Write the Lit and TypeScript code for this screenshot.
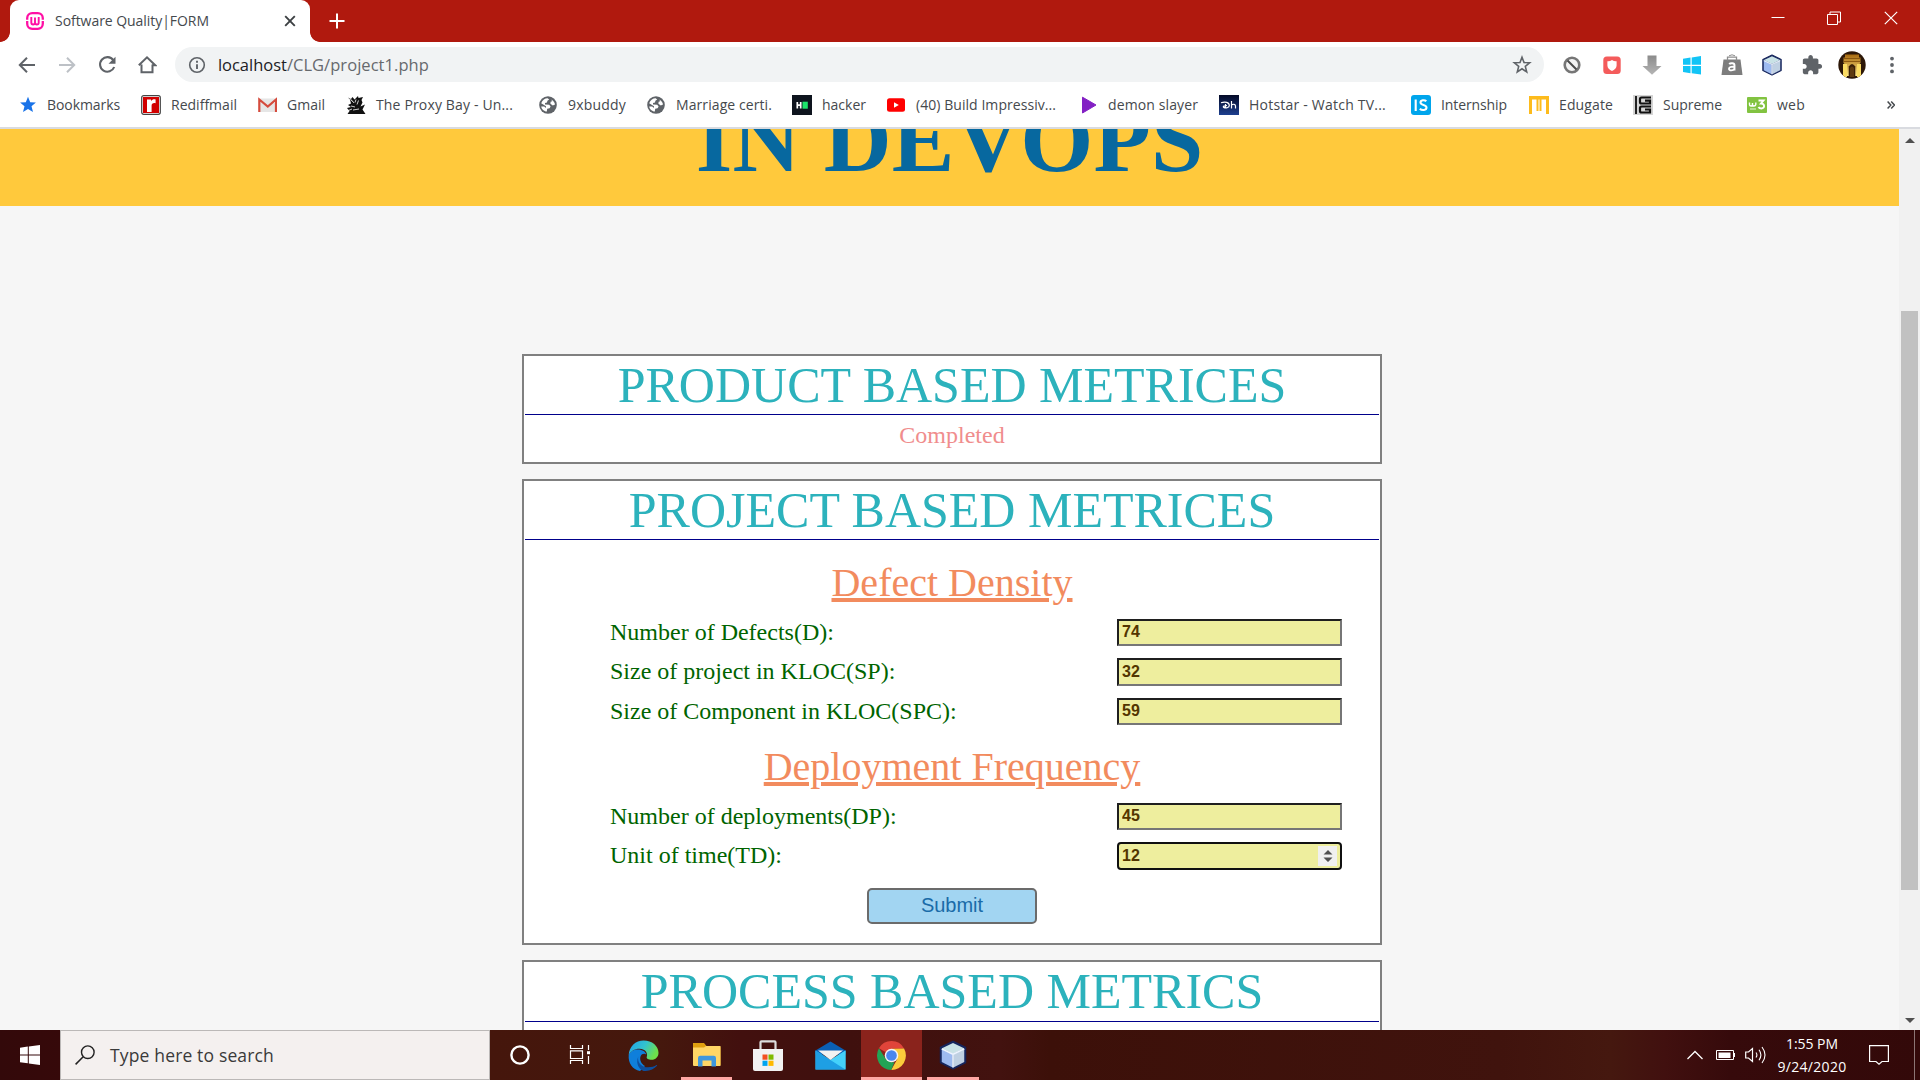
import { LitElement, html, css, svg } from "lit";
import { customElement, property } from "lit/decorators.js";

/** Single-line label that spreads its letters over a set width. */
@customElement("fit-text")
class FitText extends LitElement {
  @property() text = "";
  @property({ type: Number }) width = 0;
  static styles = css`
    :host { display: block; white-space: pre; flex: none; }
  `;
  render() {
    return html`<span>${this.text}</span>`;
  }
  firstUpdated() {
    const span = this.renderRoot.querySelector("span") as HTMLElement;
    const natural = span.getBoundingClientRect().width;
    const spacing = (this.width - natural) / Math.max(1, this.text.length);
    span.style.letterSpacing = `${spacing.toFixed(3)}px`;
  }
}

const globe = html`<svg width="20" height="20" viewBox="0 0 20 20">
  <circle cx="10" cy="10" r="8.8" fill="#5f6368" />
  <path d="M3.2 8.2C4.5 5 7 3.2 9.6 3.2l1.6 1.2-1.8 1.4-.4 1.8-2 .4 0 1.6 4.2.2 1.4 1.8-1 1.6-2.4.6-.4 2.6C6 16.4 3.6 14 3.2 11.4l3 .2 1.6 1.4.2-1.8z" fill="#fff" />
  <path d="M13.2 4.4c2.2 1.2 3.6 3 3.8 5l-2.2 1-2.4-1.6.2-2 1.6-.6z" fill="#fff" />
</svg>`;

const cube = (s: number) => html`<svg width=${s} height=${s} viewBox="0 0 24 24">
  <path d="M12 1.2 22 6v12l-10 5L2 18V6z" fill="#16255c" stroke="#16255c" stroke-width="1.2" stroke-linejoin="round" />
  <path d="M12 2.4 20.8 6.6 12 11 3.2 6.6z" fill="#c9e2e6" />
  <path d="M3 7.2 11.7 11.6V22L3 17.6z" fill="#9dbaf0" />
  <path d="M21 7.2 12.3 11.6V22l8.7-4.4z" fill="#bfd0e2" />
  <path d="M3 7 12 11.4 21 7M12 11.2V22" fill="none" stroke="#eef5ff" stroke-width="1.3" />
</svg>`;

interface Bookmark { label: string; text: number; slot: number; icon: unknown; }

const bookmarks: Bookmark[] = [
  { label: "Bookmarks", text: 73, slot: 124, icon: html`<svg width="20" height="20" viewBox="0 0 20 20"><path d="M11 1.800l2.200 5.500 5.700.300-4.400 3.700 1.500 5.800-5-3.200-5 3.200 1.500-5.800L3.100 7.600l5.700-.300z" fill="#1a73e8" /></svg>` },
  { label: "Rediffmail", text: 66, slot: 116, icon: html`<svg width="20" height="20" viewBox="0 0 20 20"><rect x=".7" y=".7" width="18.6" height="18.6" rx="2" fill="#fff" stroke="#444" stroke-width="1.2" /><rect x="2" y="2" width="16" height="16" fill="#d10000" /><path d="M6 4.5h4v1.8c1-1.6 2.4-2.2 4.6-1.9v3.8c-2.6-.5-4 .3-4 2.6V17H6z" fill="#fff" /></svg>` },
  { label: "Gmail", text: 38, slot: 89, icon: html`<svg width="20" height="20" viewBox="0 0 20 20"><rect x="2.000" y="3.500" width="17" height="13.5" rx="1" fill="#e6e6e6" /><path d="M2.300 17V4.500L10.800 11.500l8.200-7V17" fill="none" stroke="#d54b3d" stroke-width="2.2" /></svg>` },
  { label: "The Proxy Bay - Un...", text: 137, slot: 192, icon: html`<svg width="20" height="20" viewBox="0 0 20 20"><path d="M2 2.500 5 4l1.500-2 2 2.500L12 1l.500 2L17 2l-1.500 3 1 2.500-2 4 4.500-2-2.500 5 3 4.500H1.500l2-3-2.500-3 4-1-3-2 3-1.500-1-4z" fill="#111" /><path d="M4 3.500l2.500 3M6 5.500l2 2.500M10 4.500l-1 3M12.500 5.500l-1.500 4M5 11l4 1M7 15l6-1M1 16l5-2" stroke="#fff" stroke-width=".8" /></svg>` },
  { label: "9xbuddy", text: 58, slot: 108, icon: globe },
  { label: "Marriage certi.", text: 96, slot: 146, icon: globe },
  { label: "hacker", text: 44, slot: 94, icon: html`<svg width="20" height="20" viewBox="0 0 20 20"><rect width="20" height="20" fill="#0e141e" /><path d="M5.300 7v6.500M8.700 7v6.500M5 10.200h4" stroke="#fff" stroke-width="1.700" /><rect x="10.500" y="6.700" width="5.300" height="7" fill="#1ce46b" /></svg>` },
  { label: "(40) Build Impressiv...", text: 140, slot: 192, icon: html`<svg width="20" height="20" viewBox="0 0 20 20"><rect x="1" y="3.300" width="18" height="13.500" rx="2.500" fill="#f00" /><path d="M8 7.300v5.400l4.800-2.700z" fill="#fff" /></svg>` },
  { label: "demon slayer", text: 90, slot: 141, icon: html`<svg width="20" height="20" viewBox="0 0 20 20"><path d="M4.500 2.200 18 10 4.500 18z" fill="#8320c4" stroke="#8320c4" stroke-linejoin="round" /></svg>` },
  { label: "Hotstar - Watch TV...", text: 137, slot: 192, icon: html`<svg width="20" height="20" viewBox="0 0 20 20"><defs><linearGradient id="hs" x1="0" y1="0" x2="0" y2="1"><stop offset="0" stop-color="#040a26" /><stop offset="1" stop-color="#1d3f8f" /></linearGradient></defs><rect width="20" height="20" fill="url(#hs)" /><path d="M2 7.800c4-1.600 8.300-.6 8.300 2.600 0 2.600-3.700 3-5.600 2-1.300-.9.800-1.900 3.300-1.900M6.500 9v3.500M12.500 6v7.500M12.500 10.200c1.500-1.500 4-1.200 4 .800v2.500" fill="none" stroke="#fff" stroke-width="1.200" /></svg>` },
  { label: "Internship", text: 66, slot: 118, icon: html`<svg width="20" height="20" viewBox="0 0 20 20"><rect width="20" height="20" rx="3" fill="#00a5ec" /><path d="M4.700 4.500v11.500M15.300 6.300C13.500 4.500 9.500 5 9.500 7.500c0 3.200 6 1.800 6 5 0 2.900-4.500 3.300-6.700 1.200" fill="none" stroke="#fff" stroke-width="2.100" /></svg>` },
  { label: "Edugate", text: 54, slot: 104, icon: html`<svg width="20" height="20" viewBox="0 0 20 20"><path d="M0 1h20v18h-3V4.500h-4.500V16h-2V4.500h-1V16h-2V4.500H3V19H0z" fill="#fdbb1c" /></svg>` },
  { label: "Supreme", text: 59, slot: 114, icon: html`<svg width="20" height="20" viewBox="0 0 20 20"><rect width="20" height="20" fill="#d5d5d5" /><path d="M3 1v18" stroke="#222" stroke-width="2" /><path d="M18 2.500H8.500q-1.500 0-1.500 1.500v3q0 1.500 1.500 1.500H17V5.700h-5M18 11.500H8.500q-1.500 0-1.500 1.500v3q0 1.500 1.500 1.500H17v-3h-5" fill="none" stroke="#111" stroke-width="2.200" /></svg>` },
  { label: "web", text: 28, slot: 60, icon: html`<svg width="20" height="20" viewBox="0 0 20 20"><rect y="2" width="20" height="16" rx="1" fill="#82c341" /><path d="M2.500 7.500v2q0 1.500 1.500 1.500t1.500-1.500V8v1.500Q5.500 11 7 11t1.800-1.500v-2" fill="none" stroke="#fff" stroke-width="1.400" /><path d="M11.500 5.500h5l-2.500 3c4-.2 4 5 .500 5-1.500 0-2.500-.5-3-1.500" fill="none" stroke="#fff" stroke-width="1.900" /><path d="M3 14h6" stroke="#d5efbd" stroke-width="1.200" /></svg>` },
];

const extensions = [
  html`<svg width="20" height="20" viewBox="0 0 20 20"><circle cx="10" cy="10" r="7.300" fill="#f3f3f3" stroke="#767676" stroke-width="2.600" /><path d="M5.500 5.500l9 9" stroke="#4a4a4a" stroke-width="2" /></svg>`,
  html`<svg width="20" height="20" viewBox="0 0 20 20"><rect x="1.300" y="1.500" width="17.400" height="17.400" rx="3.500" fill="#f45b5b" /><path d="M5.400 6.300c1.700.2 3.200-.3 4.600-1.300 1.400 1 2.900 1.500 4.600 1.300v4.200c0 2.600-2 4.300-4.600 5.500-2.600-1.200-4.600-2.900-4.600-5.500z" fill="#fff" /></svg>`,
  html`<svg width="20" height="20" viewBox="0 0 20 20"><defs><linearGradient id="dl" x1="0" y1="0" x2="0" y2="1"><stop offset="0" stop-color="#8b8b8b" /><stop offset="1" stop-color="#b5b5b5" /></linearGradient></defs><path d="M5.500.500h9V11H19.500L10 19.800.500 11h5z" fill="url(#dl)" /></svg>`,
  html`<svg width="20" height="20" viewBox="0 0 20 20"><path d="M1 3.800 8.500 2.600v7.200H1zM9.700 2.400 19 1v8.800H9.700zM1 11h7.500v7.200L1 17.100zM9.700 11H19v8.600l-9.300-1.300z" fill="#12c4f6" /></svg>`,
  html`<svg width="22" height="22" viewBox="0 0 22 22"><path d="M2.500 5.500h17L21.500 21H.500z" fill="#7d7d7d" /><path d="M6.500 6.500V3.200h9v3.300" fill="none" stroke="#8d8d8d" stroke-width="1.300" /><path d="M8 1.800q3-2 6 0" fill="none" stroke="#8d8d8d" /><path d="M8.200 10.200c1-1.300 5.300-1.500 5.300 1v5.300M13.500 12.800c-2-.3-5.500 0-5.500 1.900 0 2.500 4.300 2 5.500 0" fill="none" stroke="#fff" stroke-width="1.900" /></svg>`,
  cube(22),
  html`<svg width="22" height="22" viewBox="0 0 24 24"><path d="M20.500 11H19V7c0-1.100-.9-2-2-2h-4V3.500C13 2.120 11.880 1 10.500 1S8 2.120 8 3.500V5H4c-1.100 0-1.990.9-1.990 2v3.800H3.500c1.490 0 2.700 1.210 2.700 2.700s-1.210 2.700-2.700 2.700H2V20c0 1.100.9 2 2 2h3.800v-1.500c0-1.490 1.210-2.700 2.700-2.700s2.700 1.210 2.700 2.700V22H17c1.100 0 2-.9 2-2v-4h1.500c1.380 0 2.500-1.120 2.500-2.500S21.880 11 20.500 11z" fill="#5f6368" /></svg>`,
  html`<svg width="28" height="28" viewBox="0 0 28 28"><defs><clipPath id="av"><circle cx="14" cy="14" r="13.700" /></clipPath><linearGradient id="gl" x1="0" y1="0" x2="0" y2="1"><stop offset="0" stop-color="#a86a10" /><stop offset="1" stop-color="#ffe985" /></linearGradient></defs><g clip-path="url(#av)"><rect width="28" height="28" fill="#2c1708" /><path d="M7 3.500h14v3h1.500V12l-1 1v12h-15V13l-1-1V6.500H7z" fill="url(#gl)" /><path d="M5 13h4v13H5zM19 13h4v13h-4z" fill="#fbdc62" /><path d="M10.700 26V15.500q3.300-5 6.600 0V26z" fill="#3b2008" /><path d="M12 26V17q2-3 4 0v9z" fill="#5e3a10" /><path d="M6 7.500h16M6 10.500h16" stroke="#7c4a08" stroke-width=".8" /></g></svg>`,
  html`<svg width="20" height="20" viewBox="0 0 20 20"><circle cx="10" cy="3.600" r="1.900" fill="#5f6368" /><circle cx="10" cy="10" r="1.900" fill="#5f6368" /><circle cx="10" cy="16.400" r="1.900" fill="#5f6368" /></svg>`,
];

const navIcons = [
  svg`<path d="M18 10H3M10 2.800 2.800 10l7.200 7.200" fill="none" stroke="#5f6368" stroke-width="2" />`,
  svg`<path d="M2 10h15M10 2.800l7.200 7.200-7.200 7.200" fill="none" stroke="#bdc1c6" stroke-width="2" />`,
  svg`<path d="M16.300 5.200A7.300 7.300 0 1 0 17.200 12" fill="none" stroke="#5f6368" stroke-width="2.100" /><path d="M18.500 1.800v7h-7z" fill="#5f6368" />`,
  svg`<path d="M4.500 9.500v7.800h11V9.500M1.800 10.200 10 2.400l8.200 7.800H15" fill="none" stroke="#5f6368" stroke-width="2" />`,
];

const wlogo = (fill: string) => html`<svg width="20" height="20" viewBox="0 0 20 20"><path d="M0 2.700 7.800 1.600v7.800H0zM8.800 1.500 20 0v9.400H8.800zM0 10.400h7.800v7.800L0 17.200zM8.800 10.400H20V20L8.800 18.400z" fill=${fill} /></svg>`;

interface TaskItem { w: number; state: string; icon: unknown; }
const tasks: TaskItem[] = [
  { w: 60, state: "", icon: html`<svg width="22" height="22" viewBox="0 0 22 22"><circle cx="11" cy="11" r="8.600" fill="none" stroke="#fff" stroke-width="2.400" /></svg>` },
  { w: 60, state: "", icon: html`<svg width="22" height="22" viewBox="0 0 22 22"><path d="M1.500 1v3.500h12V1M1.500 20v-3.500h12V20M1.500 6.800h12v7.700h-12zM19.500 1v5M19.500 12v8" fill="none" stroke="#fff" stroke-width="1.200" /><rect x="18" y="7.200" width="3" height="3" fill="#fff" /></svg>` },
  { w: 66, state: "", icon: html`<svg width="31" height="31" viewBox="0 0 31 31"><defs><linearGradient id="e1" x1="0" y1="0" x2="1" y2=".4"><stop offset="0" stop-color="#1f9fe8" /><stop offset=".55" stop-color="#32c2cf" /><stop offset="1" stop-color="#6ee04b" /></linearGradient></defs><path d="M12 31C4.500 29.500 0 23 .700 15c2-4 5-5.500 9-5.500 5 0 8 2.500 8.500 5-2-1.500-4.500-.5-5.500 1.500-1.500 3.500.500 8 4.300 10z" fill="#0f7fdb" /><path d="M10.300 16.500c-1.300 5.500 3.200 10.800 9.700 10.800 3.500 0 6.500-1 8.500-2.300.5 0 .8.300.5.800C26 29.300 21 31.300 15.500 31c-5-1.500-8-8.500-5.200-14.500z" fill="#0e4f9e" /><path d="M.700 15C1.200 6.500 7.500.500 15.700.500 24 .500 30.500 6 30.500 12.800c0 4.300-3 7-6.800 7-3.500 0-5.400-1.300-5-2.700 1.300-3-.5-8.400-7.200-8.400-5 0-9 2.500-10.800 6.300z" fill="url(#e1)" /></svg>` },
  { w: 61, state: "run", icon: html`<svg width="28" height="26" viewBox="0 0 28 26"><path d="M0 1h11l2.500 3H26q1.500 0 1.500 1.500V23H0z" fill="#e0a010" /><path d="M0 5.500h11l2-1.500h14.500V24H1q-1 0-1-1z" fill="#ffd666" /><path d="M5 24.500V16q0-2.200 2.200-2.200h13.600q2.200 0 2.200 2.200v8.500h-4.500V18.500h-9v6z" fill="#3f97dd" /></svg>` },
  { w: 62, state: "", icon: html`<svg width="30" height="31" viewBox="0 0 30 31"><path d="M7.500 10V2.300q0-1 1-1h13q1 0 1 1V10" fill="none" stroke="#ddd" stroke-width="2.200" /><path d="M0 9h30v20q0 2-2 2H2q-2 0-2-2z" fill="#f2f2f2" /><path d="M9.500 14.500h5v5.200h-5z" fill="#f25022" /><path d="M15.500 14.500h5v5.200h-5z" fill="#7fba00" /><path d="M9.500 20.700h5v5.200h-5z" fill="#00a4ef" /><path d="M15.500 20.700h5v5.200h-5z" fill="#ffb900" /></svg>` },
  { w: 62, state: "", icon: html`<svg width="31" height="29" viewBox="0 0 31 29"><path d="M.500 9.500 15.500.500l15 9v4H.500z" fill="#0a5fb4" /><path d="M.500 9.500v19h30v-19l-15 9.500z" fill="#2db8f0" /><path d="M.500 9.500 30.500 28.500H.500z" fill="#1e9fe4" /><path d="M30.500 9.500 15.500 19l15 9.500z" fill="#44d1fa" /><path d="M3 9.500h25L15.500 19z" fill="#f2f2f2" /></svg>` },
  { w: 61, state: "active", icon: html`<svg width="29" height="29" viewBox="0 0 30 30"><path d="M15 15 2 7.500A15 15 0 0 1 28 7.700L15 8z" fill="#e0443a" /><path d="M28 7.700A15 15 0 0 1 14.700 30L21 18.500 15 8z" fill="#fbcb3b" /><path d="M14.700 30A15 15 0 0 1 2 7.500L9 18.500l6 3.500 3 0z" fill="#23a455" /><circle cx="15" cy="15" r="7" fill="#f3f3f3" /><circle cx="15" cy="15" r="5.500" fill="#4a86ee" /></svg>` },
  { w: 62, state: "run", icon: cube(30) },
];

@customElement("app-root")
class AppRoot extends LitElement {
  static styles = css`
    :host {
      display: flex; flex-direction: column; width: 1920px; height: 1080px; overflow: hidden;
      font-family: "Open Sans", "Noto Sans", sans-serif; background: #f6f6f6;
    }
    * { box-sizing: border-box; }
    svg { display: block; flex: none; }
    .strip { height: 42px; background: #b0190e; display: flex; align-items: stretch; flex: none; }
    .tabwrap { width: 320px; display: flex; }
    .foot { width: 10px; align-self: flex-end; height: 10px; }
    .foot.l { background: radial-gradient(circle at 0 0, #b0190e 9.500px, #fff 10.200px); }
    .foot.r { background: radial-gradient(circle at 100% 0, #b0190e 9.500px, #fff 10.200px); }
    .tab { width: 300px; background: #fff; border-radius: 9px 9px 0 0; display: flex; align-items: center; padding: 0 14px 0 16px; }
    .tabtitle { margin-left: 11px; font-size: 14px; color: #45494d; flex: 1; padding-bottom: 1px; }
    .plus { margin-left: 9px; align-self: center; }
    .winbtns { margin-left: auto; display: flex; padding-right: 1px; }
    .winbtns span { width: 56.500px; display: flex; justify-content: center; padding-top: 11px; }
    .toolbar { height: 45px; background: #fff; display: flex; align-items: center; flex: none; padding: 0 8px 0 7.500px; }
    .nav { width: 40px; display: flex; justify-content: center; }
    .omni { height: 35px; width: 1370px; margin-left: 7.500px; border-radius: 18px; background: #f1f3f4; display: flex; align-items: center; padding: 0 12px 0 12px; }
    .url { display: flex; margin-left: 11px; flex: 1; font-size: 16.500px; color: #66696d; }
    .host { color: #202124; }
    .exts { display: flex; margin-left: 8px; }
    .exts span { width: 40px; display: flex; justify-content: center; align-items: center; }
    .marks { height: 42px; background: #fff; border-bottom: 2px solid #d9dbe0; display: flex; align-items: center; flex: none; padding: 0 25px 4px 17px; font-size: 14px; color: #45494d; }
    .mark { display: flex; align-items: center; gap: 10px; flex: none; }
    .mark fit-text { padding-bottom: 1px; }
    .more { margin-left: auto; }
    .view { height: 901px; display: flex; flex: none; }
    .page { width: 1899px; overflow: hidden; background: #f6f6f6; font-family: "Liberation Serif", serif; }
    .banner { height: 77px; background: #ffc93c; display: flex; justify-content: center; align-items: flex-end; overflow: hidden; padding-bottom: 15px; margin-bottom: 148px; }
    .banner h1 { margin: 0; font-size: 94px; line-height: 104px; color: #07689f; flex: none; }
    .box { width: 860px; margin: 0 0 15px 522px; border: 2px solid #808080; background: #fff; padding: 1px; display: flex; flex-direction: column; align-items: center; }
    .b1 { height: 110px; }
    .b2 { height: 466px; }
    .b3 { height: 110px; }
    .box h2 { margin: 0; align-self: stretch; text-align: center; font-weight: 400; font-size: 50px; line-height: 57px; border-bottom: 1px solid #00008b; color: #2cb2bc; flex: none; }
    .b3 h2 { line-height: 56px; padding-bottom: 2px; }
    .done { font-size: 24px; line-height: 27px; color: #f08d8d; margin-top: 7px; }
    h3 { margin: 19.500px 0 7.250px; font-weight: 400; font-size: 40px; line-height: 46px; color: #f28b5e; text-decoration: underline; text-decoration-thickness: 4px; text-underline-offset: 2px; }
    h3.second { margin-top: 12.250px; }
    .row { width: 732px; height: 39.500px; display: grid; grid-template-columns: 507px 225px; align-items: center; font-size: 24px; line-height: 27px; color: #006400; margin-left: 48px; flex: none; }
    .row > span { padding-bottom: 1px; }
    .field { height: 27.500px; border: 2px solid; border-color: #1f1f1f #767676 #767676 #1f1f1f; background: #eeee9e; display: flex; align-items: center; padding: 0 3px; }
    .field.focus { border: 2px solid #101010; border-radius: 4px; }
    .field input { flex: 1; min-width: 0; border: 0; padding: 0 0 1px; margin: 0; outline: 0; background: none; font: 700 16px/18px "Liberation Sans", sans-serif; color: #533500; }
    .spin { width: 19px; height: 20px; background: #f0f0f0; display: flex; align-items: center; justify-content: center; }
    .submit { margin-top: 12.250px; width: 170px; height: 36px; border: 2px solid #6b6b6b; border-radius: 5px; background: #a2d5f2; font: 20px "Liberation Sans", sans-serif; color: #1a6ba8; padding: 0 0 2px; }
    .scroll { width: 21px; background: #f1f1f1; display: flex; flex-direction: column; align-items: center; padding: 9px 0 7px; justify-content: space-between; }
    .thumb { width: 17px; height: 579px; background: #c1c1c1; margin-bottom: -39px; }
    .taskbar { height: 50px; flex: none; display: flex; color: #fff; background: linear-gradient(90deg, #33090a 0, #36090a 60px, #45160c 490px, #45180d 660px, #42100e 740px, #3f100e 850px, #42120f 1000px, #3c1009 1050px, #40130d 1500px, #45180f 1610px, #41100f 1665px, #360a0b 1730px, #330909 100%); }
    .start { width: 60px; display: flex; align-items: center; justify-content: center; }
    .search { width: 430px; background: #f4f0ef; border: 1px solid #bbb8b7; display: flex; align-items: center; padding-left: 14px; gap: 15px; font-size: 17.500px; color: #3a3a3a; }
    .task { height: 50px; display: flex; align-items: center; justify-content: center; position: relative; }
    .task.run::after, .task.active::after { content: ""; position: absolute; bottom: 0; left: 5px; right: 5px; height: 3px; background: #ffa7a4; }
    .task.active { background: #8a231c; }
    .task.active::after { left: 0; right: 0; }
    .tray { margin-left: auto; display: flex; align-items: center; }
    .clock { display: flex; flex-direction: column; align-items: center; width: 68px; margin: 0 23px 0 11px; font-size: 14px; line-height: 23px; padding-bottom: 1px; }
    .peek { width: 1px; height: 50px; background: #8c7574; margin: 0 5px 0 25px; }
  `;

  private row(label: string, value: string, focus = false) {
    return html`<div class="row"><span>${label}</span>
      <div class="field ${focus ? "focus" : ""}"><input .value=${value} aria-label=${label} />
        ${focus ? html`<span class="spin"><svg width="10" height="14" viewBox="0 0 10 14"><path d="M.500 5.500 5 1l4.500 4.500zM.500 8.500h9L5 13z" fill="#505050" /></svg></span>` : ""}
      </div></div>`;
  }

  render() {
    return html`
      <header class="strip">
        <div class="tabwrap"><i class="foot l"></i>
          <div class="tab">
            <svg width="18" height="18" viewBox="0 0 18 18"><rect x="1.200" y="1.200" width="15.600" height="15.600" rx="5" fill="none" stroke="#ff10a5" stroke-width="2.300" /><path d="M5.300 5v5.500q0 2 1.800 2T9 10.500V5.500v5q0 2 1.900 2t1.800-2V5" fill="none" stroke="#ff10a5" stroke-width="1.900" /><path d="M0 8.300h3M15 8.300h3" stroke="#fff" stroke-width="1.300" /></svg>
            <fit-text class="tabtitle" text="Software Quality|FORM" width="154"></fit-text>
            <svg width="12" height="12" viewBox="0 0 12 12"><path d="M1.200 1.200l9.600 9.600M10.800 1.200l-9.600 9.600" stroke="#3c4043" stroke-width="1.900" /></svg>
          </div><i class="foot r"></i></div>
        <svg class="plus" width="16" height="16" viewBox="0 0 16 16"><path d="M8 .500v15M.500 8h15" stroke="#fff" stroke-width="2" /></svg>
        <div class="winbtns">
          <span><svg width="14" height="14" viewBox="0 0 14 14"><path d="M.500 6.500h13" stroke="#fff" /></svg></span>
          <span><svg width="14" height="14" viewBox="0 0 14 14"><path d="M.500 3.500h10v10H.500zM3 3.500v-2.500h10.500v10H10.500" fill="none" stroke="#fff" stroke-width="1" /></svg></span>
          <span><svg width="14" height="14" viewBox="0 0 14 14"><path d="M.800.800l12.400 12.400M13.200.800.800 13.200" stroke="#fff" stroke-width="1.200" /></svg></span>
        </div>
      </header>
      <nav class="toolbar">
        ${navIcons.map((i) => html`<span class="nav"><svg width="20" height="20" viewBox="0 0 20 20">${i}</svg></span>`)}
        <div class="omni">
          <svg width="20" height="20" viewBox="0 0 20 20"><circle cx="10" cy="10" r="7.300" fill="none" stroke="#5f6368" stroke-width="1.600" /><path d="M10 9.200v4.800M10 5.800v1.900" stroke="#5f6368" stroke-width="1.900" /></svg>
          <div class="url"><fit-text class="host" text="localhost" width="69"></fit-text><fit-text text="/CLG/project1.php" width="142"></fit-text></div>
          <svg width="20" height="20" viewBox="0 0 20 20"><path d="M10 2.300l2 5.200 5.700.300-4.400 3.600 1.400 5.500-4.700-3.100-4.700 3.100 1.400-5.500-4.400-3.600 5.700-.300z" fill="none" stroke="#5f6368" stroke-width="1.600" /></svg>
        </div>
        <div class="exts">${extensions.map((e) => html`<span>${e}</span>`)}</div>
      </nav>
      <nav class="marks">
        ${bookmarks.map((b) => html`<div class="mark" style="width:${b.slot}px">${b.icon}<fit-text text=${b.label} width=${b.text}></fit-text></div>`)}
        <svg class="more" width="8" height="8" viewBox="0 0 8 8"><path d="M.600.600 3.800 4 .600 7.400M4.200.600 7.400 4 4.200 7.400" fill="none" stroke="#45494d" stroke-width="1.500" /></svg>
      </nav>
      <div class="view">
        <main class="page">
          <div class="banner"><h1>IN DEVOPS</h1></div>
          <section class="box b1"><h2>PRODUCT BASED METRICES</h2><div class="done">Completed</div></section>
          <section class="box b2"><h2>PROJECT BASED METRICES</h2>
            <h3>Defect Density</h3>
            ${this.row("Number of Defects(D):", "74")}
            ${this.row("Size of project in KLOC(SP):", "32")}
            ${this.row("Size of Component in KLOC(SPC):", "59")}
            <h3 class="second">Deployment Frequency</h3>
            ${this.row("Number of deployments(DP):", "45")}
            ${this.row("Unit of time(TD):", "12", true)}
            <button class="submit">Submit</button>
          </section>
          <section class="box b3"><h2>PROCESS BASED METRICS</h2></section>
        </main>
        <div class="scroll">
          <svg width="10" height="5" viewBox="0 0 10 5"><path d="M0 5 5 0l5 5z" fill="#505050" /></svg>
          <div class="thumb"></div>
          <svg width="10" height="5" viewBox="0 0 10 5"><path d="M0 0h10L5 5z" fill="#505050" /></svg>
        </div>
      </div>
      <footer class="taskbar">
        <div class="start">${wlogo("#fff")}</div>
        <div class="search">
          <svg width="20" height="20" viewBox="0 0 20 20"><circle cx="12.800" cy="7.200" r="6.300" fill="none" stroke="#222" stroke-width="1.400" /><path d="M8.200 11.800.600 19.400" stroke="#222" stroke-width="1.500" /></svg>
          <fit-text text="Type here to search" width="164"></fit-text>
        </div>
        ${tasks.map((t) => html`<div class="task ${t.state}" style="width:${t.w}px">${t.icon}</div>`)}
        <div class="tray">
          <svg width="16" height="10" viewBox="0 0 16 10"><path d="M.500 9 8 1.500 15.500 9" fill="none" stroke="#fff" stroke-width="1.300" /></svg>
          <svg width="42" height="20" viewBox="0 0 42 20"><path d="M13.500 5.500h17v9h-17zM31.500 8v4" fill="none" stroke="#fff" /><rect x="15.500" y="7.500" width="12" height="5.500" fill="#fff" /></svg>
          <svg width="22" height="20" viewBox="0 0 22 20"><path d="M.700 7h2.800l4-3.500v13L3.500 13H.700z" fill="none" stroke="#fff" stroke-width="1.200" /><path d="M11 7.500q1.800 2.500 0 5M14 4.800q3.800 5.200 0 10.400M17 2q6 8 0 16" fill="none" stroke="#fff" stroke-width="1.100" /></svg>
          <div class="clock"><fit-text text="1:55 PM" width="52"></fit-text><fit-text text="9/24/2020" width="69"></fit-text></div>
          <svg width="20" height="20" viewBox="0 0 20 20"><path d="M.600.600h18.800v15.900h-6.400L10 19.200 7 16.500H.600z" fill="none" stroke="#fff" stroke-width="1.200" /></svg>
          <span class="peek"></span>
        </div>
      </footer>`;
  }
}
